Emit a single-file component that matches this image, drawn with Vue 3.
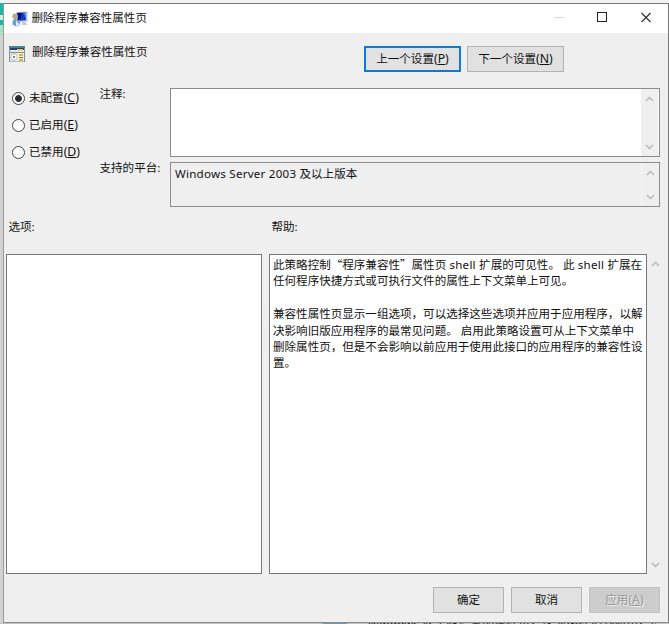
<script setup>
const states = [
  { label: '未配置', key: 'C', on: true },
  { label: '已启用', key: 'E', on: false },
  { label: '已禁用', key: 'D', on: false },
]
</script>

<template>
  <div class="desktop">
    <div class="behind-left"><i class="teal"></i><i class="glint"></i><i class="mint"></i></div>
    <div class="behind-bottom"><i class="tile"></i></div>
    <div class="behind-text">Windows 此策略设置的属性页程序兼容性控制应用程序</div>
    <div class="window">
      <header class="titlebar">
        <svg class="app-icon" width="16" height="16" viewBox="0 0 16 16">
          <path d="M4 1 15.500 .5v10L5 11z" fill="#b4c1d6" />
          <path d="M5 2 14 1.600v7.600L6 9.800z" fill="#173fba" />
          <path d="M5 2 10 1.800 8.500 8 6 9.800z" fill="#080d86" />
          <path d="M11.500 1.700H14v6z" fill="#5d86ec" />
          <path d="M9.500 11h4l2 3h-5z" fill="#c3c9d5" />
          <circle cx="3.200" cy="5.200" r="2.800" fill="#b5a988" />
          <path d="M.5 13.500Q0 8 3.500 8 8 8 8.500 14L4 15.500z" fill="#6d9bd8" />
          <path d="M4 9l2 3 3 1.500-5 1.500z" fill="#e2edf9" />
        </svg>
        <h1>删除程序兼容性属性页</h1>
        <svg class="controls" width="110" height="29" viewBox="0 0 110 29">
          <path d="M5 13.500h10" stroke="#d8d8d8" />
          <rect x="48.500" y="8.500" width="9" height="9" fill="none" stroke="#222" />
          <path d="M92.500 9l9 9M101.500 9l-9 9" fill="none" stroke="#333" stroke-width="1.200" />
        </svg>
      </header>

      <section class="heading">
        <svg class="policy-icon" width="16" height="16" viewBox="0 0 16 16">
          <rect width="16" height="16" fill="#7f9297" />
          <rect width="16" height="2" fill="#4c8392" />
          <rect x="1" y="2" width="14" height="2" fill="#263f7a" />
          <rect x="1" y="4" width="14" height="2" fill="#e8ebdc" />
          <rect x="8" y="3" width="6" height="1.500" fill="#e4c747" />
          <rect x="1" y="7" width="8" height="8.500" fill="#e7ebe8" />
          <circle cx="5" cy="11" r="3.300" fill="#fafafa" stroke="#8c9a9c" stroke-width=".6" />
          <circle cx="5" cy="11" r="1.100" fill="#566a70" />
          <rect x="8.500" y="7" width="6.500" height="8.500" fill="#fdf0bd" />
          <path d="M10 9h4M10 11.500h4M10 14h4" stroke="#777751" />
        </svg>
        <h2>删除程序兼容性属性页</h2>
        <button class="nav focus">上一个设置<span class="key">(<u>P</u>)</span></button>
        <button class="nav">下一个设置<span class="key">(<u>N</u>)</span></button>
      </section>

      <section class="settings">
        <div class="radios">
          <label v-for="s in states" :key="s.key">
            <i class="radio" :class="{ on: s.on }"></i><span>{{ s.label }}<span class="key">(<u>{{ s.key }}</u>)</span></span>
          </label>
        </div>
        <div class="fields">
          <span class="caption">注释:</span>
          <div class="field comment">
            <div class="field-text"></div>
            <div class="scroll">
              <svg width="9" height="6" viewBox="0 0 9 6"><path d="M1 5 4.500 1.500 8 5" /></svg>
              <svg width="9" height="6" viewBox="0 0 9 6"><path d="M1 1 4.500 4.500 8 1" /></svg>
            </div>
          </div>
          <span class="caption">支持的平台:</span>
          <div class="field platform">
            <div class="field-text"><span class="latin">Windows Server 2003 </span>及以上版本</div>
            <div class="scroll">
              <svg width="9" height="6" viewBox="0 0 9 6"><path d="M1 5 4.500 1.500 8 5" /></svg>
              <svg width="9" height="6" viewBox="0 0 9 6"><path d="M1 1 4.500 4.500 8 1" /></svg>
            </div>
          </div>
        </div>
      </section>

      <section class="panels">
        <h3>选项:</h3>
        <h3 class="help-title">帮助:</h3>
        <div class="options"></div>
        <div class="help">
          <p>此策略控制<span class="q">“</span>程序兼容性<span class="q">”</span>属性页<span class="shell"> shell </span>扩展的可见性。 此<span class="shell"> shell </span>扩展在</p>
          <p>任何程序快捷方式或可执行文件的属性上下文菜单上可见。</p>
          <p>&nbsp;</p>
          <p>兼容性属性页显示一组选项，可以选择这些选项并应用于应用程序，以解</p>
          <p>决影响旧版应用程序的最常见问题。 启用此策略设置可从上下文菜单中</p>
          <p>删除属性页，但是不会影响以前应用于使用此接口的应用程序的兼容性设</p>
          <p>置。</p>
        </div>
        <div class="scroll">
          <svg width="9" height="6" viewBox="0 0 9 6"><path d="M1 5 4.500 1.500 8 5" /></svg>
          <svg width="9" height="6" viewBox="0 0 9 6"><path d="M1 1 4.500 4.500 8 1" /></svg>
        </div>
      </section>

      <footer>
        <button>确定</button>
        <button>取消</button>
        <button class="disabled">应用<span class="key">(<u>A</u>)</span></button>
      </footer>
    </div>
  </div>
</template>

<style>
body { overflow: hidden; }
</style>

<style scoped>
* { box-sizing: border-box; margin: 0; }
.desktop {
  position: relative;
  width: 669px;
  height: 624px;
  padding: 3px 0 1px 3px;
  overflow: hidden;
  background: #d2d2d2;
  color: #111;
  font: 11.55px/16.4px "Noto Sans", "Noto Sans CJK SC", sans-serif;
  white-space: nowrap;
}
.desktop::before { content: ""; position: absolute; left: 0; top: 0; width: 669px; height: 3px; background: #f1f1f1; }
.behind-left i { position: absolute; left: 0; width: 3px; }
.behind-left .teal { top: 3px; height: 22px; background: #20b5a0; }
.behind-left .glint { top: 15px; height: 5px; background: #cdeee6; }
.behind-left .mint { top: 25px; height: 10px; background: #a7e3cb; }
.behind-bottom { position: absolute; left: 0; bottom: 0; width: 669px; height: 1px; background: #c2c2c2; }
.tile { position: absolute; left: 323px; width: 24px; height: 1px; background: #7397b2; }
.behind-text { position: absolute; left: 368px; top: 617px; width: 288px; height: 16px; overflow: hidden; font-size: 12px; }
.window {
  position: relative;
  display: flex;
  flex-direction: column;
  width: 666px;
  height: 620px;
  border: 1px solid #777;
  border-left-color: #999;
  border-bottom-color: #8c8c8c;
  background: #efefef;
}
h1, h2, h3 { font: inherit; }
u { text-decoration: underline; text-underline-offset: 1px; text-decoration-thickness: 1px; }
.key { font-size: 12.3px; }
.latin { letter-spacing: .25px; }
.shell { letter-spacing: .25px; }
.q { font-family: "Noto Sans CJK SC", sans-serif; line-height: 1; }
.titlebar { display: flex; align-items: center; height: 29px; padding-left: 8px; background: #fff; }
.titlebar h1 { margin-left: 3.500px; }
.controls { margin: 0 9px 0 auto; }
.heading { display: flex; align-items: flex-start; height: 55px; padding: 13px 0 0 5px; }
.heading h2 { width: 332px; margin: -2px 0 0 7px; }
.heading .nav { width: 97px; margin-right: 6px; }
button {
  display: flex;
  justify-content: center;
  align-items: center;
  width: 71px;
  height: 26px;
  padding: 0;
  border: 1px solid #b3b3b3;
  border-radius: 0;
  background: #e1e1e1;
  color: #111;
  font: inherit;
}
button.focus { border: 2px solid #0b7bd7; }
button.disabled { border-color: #c2c2c2; background: #ccc; color: #999; text-shadow: 1px 1px 0 #eee; }
.settings { display: flex; height: 166px; }
.radios { width: 95px; padding: 1px 0 0 8px; }
.radios label { display: flex; align-items: center; gap: 4px; height: 27px; padding-bottom: 8px; }
.radio { width: 13px; height: 13px; border: 1px solid #444; border-radius: 50%; background: #fff; }
.radio.on { background: radial-gradient(circle, #2b2b2b 0 3px, #fff 3.800px); }
.fields { display: grid; grid-template-columns: 71px 490px; grid-template-rows: 69px 45px; row-gap: 5px; }
.caption { margin-top: -2.500px; padding-left: .5px; }
.field { display: flex; border: 1px solid #8c8c8c; }
.field-text { flex: 1; padding: 3px 0 0 4px; }
.comment .field-text { background: #fff; }
.scroll { display: flex; flex-direction: column; justify-content: space-between; align-items: center; width: 17px; padding: 7px 0 6px; background: #efefef; }
.scroll path { fill: none; stroke: #bdbdbd; stroke-width: 1.700; }
.field .scroll { width: 18px; }
.comment .scroll { border-right: 1px solid #fff; }
.platform .scroll { border-left: 1px solid #f7f7f7; padding-right: 1px; }
.panels { display: grid; grid-template-columns: 256px 378px 17px; column-gap: 7px; grid-template-rows: 36px 320px; padding-left: 2px; margin-top: -36px; }
.panels h3 { padding: .6px 0 0 2.500px; }
.panels .help-title { grid-column: 2 / 4; }
.options, .help { border: 1px solid #777; background: #fff; }
.help { padding: 2px 0 0 3px; }
.panels .scroll { margin-left: -7px; }
footer { display: flex; gap: 7px; padding: 13px 0 0 429px; }
</style>
